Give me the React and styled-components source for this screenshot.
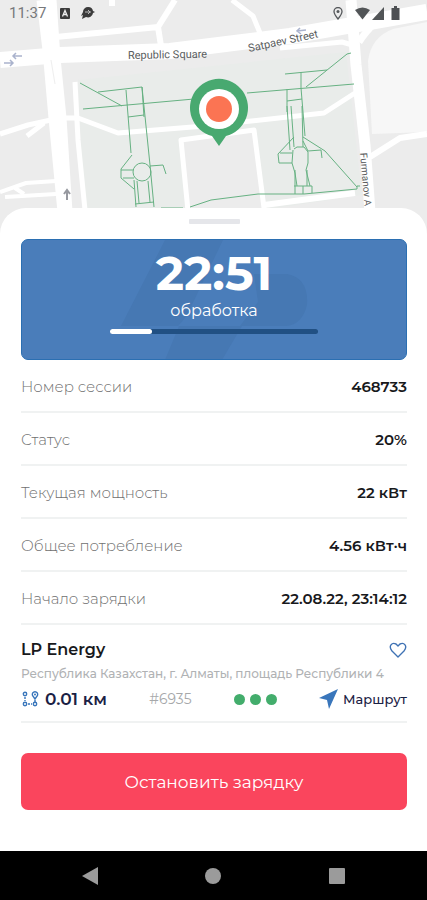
import React from "react";
import styled, { createGlobalStyle } from "styled-components";

const GlobalStyle = createGlobalStyle`
  *, *::before, *::after { box-sizing: border-box; }
  body { margin: 0; background: #ffffff; font-family: Montserrat, Inter, "Noto Sans", sans-serif; }
  button { font: inherit; border: 0; padding: 0; background: none; cursor: pointer; }
  dl, dt, dd, h1, h2, p { margin: 0; }
`;

const Screen = styled.div`
  display: flex;
  flex-direction: column;
  min-height: 100vh;
`;

const MapArea = styled.header`
  position: relative;
  height: 240px;
  background: #ececec;
  overflow: hidden;
`;

const MapDrawing = styled.svg`
  position: absolute;
  inset: 0;
  width: 100%;
  height: 100%;
`;

const StatusBar = styled.div`
  position: relative;
  display: flex;
  align-items: center;
  height: 26px;
  padding: 0 27px 0 9px;
  color: #77797b;
  font: 15px/26px Roboto, sans-serif;
`;

const StatusIcons = styled.div`
  display: flex;
  align-items: center;
  gap: ${(p) => p.$gap};
  margin-left: ${(p) => p.$start};
`;

const Sheet = styled.main`
  position: relative;
  display: flex;
  flex: 1;
  flex-direction: column;
  margin-top: -32px;
  padding: 11px 20px 41px 21px;
  border-radius: 26px 26px 0 0;
  background: #ffffff;
`;

const Handle = styled.div`
  align-self: center;
  width: 51px;
  height: 5px;
  margin-bottom: 15px;
  border-radius: 1px;
  background: #e5e6ea;
`;

const TimerCard = styled.section`
  position: relative;
  display: flex;
  flex-direction: column;
  align-items: center;
  height: 121px;
  border: 1px solid #2b6fb2;
  border-radius: 7px;
  background: #4a7dba;
  color: #ffffff;
  overflow: hidden;
`;

const CardMark = styled.svg`
  position: absolute;
  top: 0;
  left: 50%;
  width: 200px;
  height: 120px;
  margin-left: -100px;
`;

const Timer = styled.h1`
  position: relative;
  margin-top: 5px;
  font-size: 48px;
  font-weight: 700;
  line-height: 56px;
`;

const TimerNote = styled.p`
  position: relative;
  font-size: 16px;
  line-height: 20px;
`;

const Track = styled.div`
  position: relative;
  width: 54%;
  height: 5px;
  margin-top: 8px;
  border-radius: 3px;
  background: #215083;
`;

const Fill = styled.div`
  height: 100%;
  border-radius: 3px;
  background: #ffffff;
`;

const Details = styled.dl`
  display: flex;
  flex-direction: column;
`;

const DetailRow = styled.div`
  display: flex;
  align-items: center;
  justify-content: space-between;
  height: 53px;
  padding-top: 2px;
  border-bottom: 2px solid #f0f2f2;
`;

const Term = styled.dt`
  color: #6f7070;
  font-size: 15px;
  font-weight: 300;
`;

const Value = styled.dd`
  color: #18191c;
  font-size: 15px;
  font-weight: 600;
`;

const Station = styled.section`
  display: flex;
  flex-direction: column;
  padding: 12px 0 9px;
  border-bottom: 2px solid #f0f2f2;
`;

const StationTop = styled.div`
  display: flex;
  align-items: center;
  justify-content: space-between;
  height: 25px;
`;

const StationName = styled.h2`
  color: #18191c;
  font-size: 16px;
  font-weight: 600;
  line-height: 22px;
`;

const IconButton = styled.button`
  display: flex;
`;

const Address = styled.p`
  color: #b0b2b4;
  font-size: 12px;
  font-weight: 500;
  line-height: 24px;
  white-space: nowrap;
`;

const StationMeta = styled.div`
  display: flex;
  align-items: center;
  justify-content: space-between;
  height: 26px;
  color: #1b2144;
`;

const Distance = styled.span`
  display: flex;
  align-items: center;
  gap: 6px;
  font-size: 17px;
  font-weight: 600;
`;

const StationId = styled.span`
  color: #a6a8aa;
  font-size: 14px;
`;

const Dots = styled.span`
  display: flex;
  gap: 5px;
`;

const Dot = styled.span`
  width: 11px;
  height: 11px;
  border-radius: 50%;
  background: #43ad6c;
`;

const RouteButton = styled.button`
  display: flex;
  align-items: center;
  gap: 5px;
  color: #1b2144;
  && { font-size: 13px; font-weight: 500; }
`;

const StopButton = styled.button`
  height: 57px;
  margin-top: 30px;
  border-radius: 7px;
  && { background: #fa455d; font-size: 17px; }
  color: #ffffff;
`;

const NavBar = styled.nav`
  display: flex;
  align-items: center;
  justify-content: space-around;
  height: 49px;
  padding: 0 28px;
  background: #000000;
`;

const NavButton = styled.button`
  display: flex;
  justify-content: center;
  width: 48px;
`;

function CityMap() {
  return (
    <MapDrawing viewBox="0 0 427 240" preserveAspectRatio="xMidYMin slice" aria-hidden="true">
      <rect width="427" height="240" fill="#ececec" />
      <path d="M368 61 Q371 37 393 29 L427 22 V132 L372 134Z" fill="#f7f7f7" />
      <path d="M78 80 L346 52 L362 195 L264 210 H84Z" fill="#e9ecea" />
      <path d="M182 140 L254 132 L264 208 H188Z" fill="#ececec" />
      <g fill="none" stroke="#ffffff" strokeLinejoin="round">
        <path d="M0 60 L60 55 L170 51 L290 36 L427 12" strokeWidth="16" />
        <path d="M43 0 L49 50 L55 118 L64 212" strokeWidth="13" />
        <path d="M50 0 L54 58 L60 118 L66 212" strokeWidth="13" />
        <path d="M75 82 L78 140 L85 210" strokeWidth="5" />
        <path d="M56 37 L158 27 L161 46 M158 27 L175 0 M112 0 V6" strokeWidth="6" />
        <path d="M232 0 L253 16 L262 38 M280 48 L342 42 L356 46" strokeWidth="5" />
        <path d="M351 0 L356 65 L365 145 L370 212" strokeWidth="11" />
        <path d="M359 42 Q374 19 390 15" strokeWidth="7" />
        <path d="M0 134 L28 125 L60 118 L78 118 L118 133 L205 126 L324 113 L355 93" strokeWidth="5" />
        <path d="M27 136 L44 123" strokeWidth="5" />
        <path d="M188 211 L181 140 L254 130 L264 208" strokeWidth="5" />
        <path d="M264 205 L355 193" strokeWidth="6" />
        <path d="M370 157 L400 138 L427 134" strokeWidth="6" />
        <path d="M0 192 L26 183 L56 181 M5 197 L56 194 M15 188 L24 194" strokeWidth="4" />
      </g>
      <path d="M51 60 L55 84" fill="none" stroke="#eeeeee" strokeWidth="1" />
      <g fill="none" stroke="#66b182" strokeWidth="1">
        <path d="M80 83 L122 106 M98 92 L142 87 L144 117 M83 109 L205 98 M126 90 L131 153 M142 87 L150 165 L154 207 M128 117 L144 115" />
        <circle cx="142" cy="172" r="9" />
        <path d="M132 155 L121 169 V178 L134 189 M121 170 H133 M123 178 H134 M150 166 L163 165 L166 174 M134 180 L136 207 M137 181 L139 203 M148 181 L150 202 M135 204 L154 202" />
        <path d="M247 93 L354 84 M285 74 L327 70 M301 72 V88 M306 87 L347 54 L351 53 M287 89 V112 M301 88 L305 136 M287 101 L302 99" />
        <path d="M287 106 L290 150 M291 106 L294 147 M302 106 L303 147 M294 137 L278 154 L279 163 H292 M280 153 H292 M303 137 L325 151 L357 187 M303 141 L308 151 L321 150 L322 158 M294 149 L297 147 H304 L308 152 M293 150 L292 163 L295 173 L297 186 M308 152 V163 L306 170 L310 186 M295 170 V194 M307 170 V186 M294 186 H312 V193 M303 186 V194" />
        <path d="M161 208 H183 M190 207 L211 200 L258 194 L304 194 L357 189 V186 H360" />
      </g>
      <g fill="#5a5d60" fontFamily="Roboto, sans-serif" fontSize="11">
        <text x="128" y="59" transform="rotate(-1 128 59)">Republic Square</text>
        <text x="249" y="52" transform="rotate(-12 249 52)">Satpaev Street</text>
        <text x="360" y="153" fontSize="10" transform="rotate(85 360 153)">Furmanov A</text>
      </g>
      <g fill="none" stroke="#aab3cd" strokeWidth="1.5">
        <path d="M22 56 H13 M16 53 L13 56 L16 59 M4 63 H13 M10 60 L13 63 L10 66" />
        <path d="M306 30 L297 31 M300 28 L297 31 L301 34" />
      </g>
      <path d="M67 200 V190 M64 194 L67 190 L70 194" fill="none" stroke="#9799a0" strokeWidth="2" />
      <path d="M219 146 L212 136 A29 29 0 1 1 226 136Z" fill="#48a970" />
      <circle cx="219" cy="109" r="20" fill="#ffffff" />
      <circle cx="219" cy="109" r="13" fill="#fb7453" />
    </MapDrawing>
  );
}

function Status() {
  return (
    <StatusBar>
      <span>11:37</span>
      <StatusIcons $gap="11px" $start="14px">
        <svg width="10" height="11" viewBox="0 0 10 11" aria-hidden="true">
          <rect width="10" height="11" rx="1" fill="#3b3b3b" />
          <path d="M2.5 8.5 L5 2.5 L7.5 8.5 M3.5 6.5 H6.5" fill="none" stroke="#eeeeee" strokeWidth="1.3" />
        </svg>
        <svg width="14" height="12" viewBox="0 0 14 12" aria-hidden="true">
          <path d="M7 0 A5 5 0 0 1 12 4 L14 5 L12 6 A5 5 0 0 1 5 10 L1 12 L2 8 L0 9 L2 5 A5 5 0 0 1 7 0Z" fill="#3b3b3b" />
          <path d="M4 5 H10 M7 3 L9 5 L7 7" stroke="#bbbbbb" fill="none" />
        </svg>
      </StatusIcons>
      <StatusIcons $gap="6px" $start="auto">
        <svg width="22" height="13" viewBox="0 0 22 13" aria-hidden="true">
          <path d="M5 12 Q1 7 1 4.5 A4 4 0 0 1 9 4.5 Q9 7 5 12Z" fill="none" stroke="#55585b" strokeWidth="1.3" />
          <circle cx="5" cy="4.5" r="1.5" fill="#55585b" />
        </svg>
      </StatusIcons>
      <StatusIcons $gap="2px" $start="0">
        <svg width="15" height="13" viewBox="0 0 15 13" aria-hidden="true">
          <path d="M0 3 Q7.5 -2 15 3 L7.5 12.5Z" fill="#525557" />
        </svg>
        <svg width="13" height="13" viewBox="0 0 13 13" aria-hidden="true">
          <path d="M12 0 V13 H0Z" fill="#525557" />
        </svg>
      </StatusIcons>
      <StatusIcons $gap="0" $start="6px">
        <svg width="9" height="14" viewBox="0 0 9 14" aria-hidden="true">
          <path d="M3 0 H6 V2 H8.5 V14 H0.5 V2 H3Z" fill="#4d5053" />
        </svg>
      </StatusIcons>
    </StatusBar>
  );
}

const session = [
  ["Номер сессии", "468733"],
  ["Статус", "20%"],
  ["Текущая мощность", "22 кВт"],
  ["Общее потребление", "4.56 кВт·ч"],
  ["Начало зарядки", "22.08.22, 23:14:12"],
];

export default function App() {
  const progress = 20;
  return (
    <Screen>
      <GlobalStyle />
      <MapArea>
        <CityMap />
        <Status />
      </MapArea>
      <Sheet>
        <Handle />
        <TimerCard>
          <CardMark viewBox="0 0 200 120" aria-hidden="true">
            <path d="M51 0 H109 L76 69 Q72 78 64 86 H7Z M65 86 H128 L108 120 H51Z M140 34 H173 Q195 38 193 65 Q188 85 172 86 H126 L144 62Z" fill="#4678b3" />
          </CardMark>
          <Timer>22:51</Timer>
          <TimerNote>обработка</TimerNote>
          <Track role="progressbar" aria-label="обработка" aria-valuenow={progress} aria-valuemin={0} aria-valuemax={100}>
            <Fill style={{ width: `${progress}%` }} />
          </Track>
        </TimerCard>
        <Details>
          {session.map(([term, value]) => (
            <DetailRow key={term}>
              <Term>{term}</Term>
              <Value>{value}</Value>
            </DetailRow>
          ))}
        </Details>
        <Station>
          <StationTop>
            <StationName>LP Energy</StationName>
            <IconButton type="button" aria-label="В избранное">
              <svg width="18" height="16" viewBox="0 0 18 16" aria-hidden="true">
                <path d="M9 15 L3 9 C-1 4 3 0 7 2 L9 4 L11 2 C15 0 19 4 15 9Z" fill="none" stroke="#3f72b4" strokeWidth="1.4" strokeLinejoin="round" />
              </svg>
            </IconButton>
          </StationTop>
          <Address>Республика Казахстан, г. Алматы, площадь Республики 4</Address>
          <StationMeta>
            <Distance>
              <svg width="18" height="16" viewBox="0 0 18 16" aria-hidden="true">
                <g fill="none" stroke="#3976bb" strokeWidth="1.4">
                  <circle cx="4" cy="3" r="1.7" />
                  <circle cx="4" cy="13" r="1.7" />
                  <circle cx="14" cy="13" r="1.7" />
                  <path d="M4 6 V10 M7 13 H11 M14 9 V11" strokeDasharray="2 1" />
                  <path d="M14 8 L11.5 4.5 A2.7 2.7 0 1 1 16.5 4.5Z" />
                </g>
                <circle cx="14" cy="3.5" r="1" fill="#3976bb" />
              </svg>
              0.01 км
            </Distance>
            <StationId>#6935</StationId>
            <Dots>
              <Dot />
              <Dot />
              <Dot />
            </Dots>
            <RouteButton type="button">
              <svg width="19" height="20" viewBox="0 0 19 20" aria-hidden="true">
                <path d="M19 0 L10 20 L8 11 L0 9Z" fill="#3976bb" />
              </svg>
              Маршрут
            </RouteButton>
          </StationMeta>
        </Station>
        <StopButton type="button">Остановить зарядку</StopButton>
      </Sheet>
      <NavBar aria-label="Системная навигация">
        <NavButton type="button" aria-label="Назад">
          <svg width="16" height="18" viewBox="0 0 16 18" aria-hidden="true">
            <path d="M16 0 V18 L0 9Z" fill="#9b9b9b" />
          </svg>
        </NavButton>
        <NavButton type="button" aria-label="Домой">
          <svg width="16" height="16" viewBox="0 0 16 16" aria-hidden="true">
            <circle cx="8" cy="8" r="8" fill="#9b9b9b" />
          </svg>
        </NavButton>
        <NavButton type="button" aria-label="Недавние">
          <svg width="16" height="16" viewBox="0 0 16 16" aria-hidden="true">
            <rect width="16" height="16" rx="1" fill="#9b9b9b" />
          </svg>
        </NavButton>
      </NavBar>
    </Screen>
  );
}
